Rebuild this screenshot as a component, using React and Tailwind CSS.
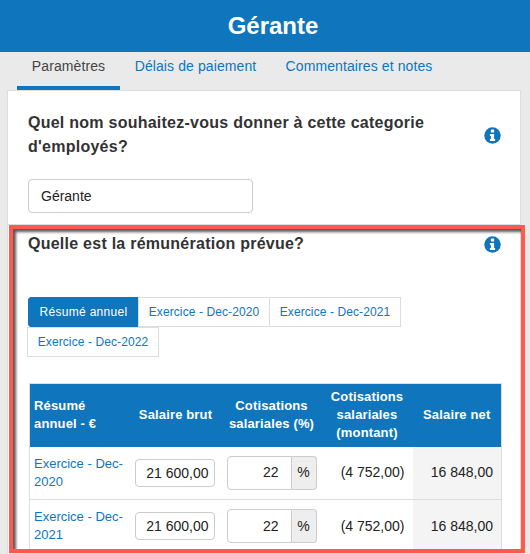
const FONT = "font-['Liberation_Sans',Arial,sans-serif]"

function InfoIcon() {
  return (
    <svg viewBox="0 0 17 17" className="-mr-px h-[17px] w-[17px] shrink-0">
      <circle cx="8.5" cy="8.5" r="8.25" fill="#0f75bc" />
      <rect x="6.9" y="2.6" width="3.2" height="2.9" rx="0.6" fill="#fff" />
      <path d="M5.9 6.9h4.2v5.2h1v2H5.9v-2h1V8.9h-1z" fill="#fff" />
    </svg>
  )
}

function Question({ children }) {
  return (
    <div className="flex items-center justify-between">
      <h2 className="w-[420px] text-[16px] leading-[24px] font-bold tracking-[0.25px] text-[#333]">{children}</h2>
      <InfoIcon />
    </div>
  )
}

function SubTab({ children, active }) {
  return (
    <a
      className={
        'flex h-[30px] items-center justify-center border text-[12px] ' +
        (active
          ? 'w-[111px] rounded-l-[3px] border-[#0f75bc] bg-[#0f75bc] tracking-[0.3px] text-white'
          : '-ml-px w-[132px] border-[#ddd] bg-white tracking-[0.1px] text-[#0f75bc] first:ml-0')
      }
    >
      {children}
    </a>
  )
}

function Row({ label }) {
  return (
    <tr className="h-[53px] border-b border-[#ddd] text-[14px] text-[#222]">
      <td className="pr-[4px] pl-[4px] align-middle text-[13px] leading-[18px] text-[#0f75bc]">{label}</td>
      <td className="px-[5px] align-middle">
        <input
          readOnly
          value="21 600,00"
          className="h-[28px] w-[80px] rounded-[4px] border border-[#ccc] bg-white pr-[5px] text-right outline-none"
        />
      </td>
      <td className="px-[5px] align-middle">
        <div className="flex h-[34px] w-[90px]">
          <input
            readOnly
            value="22"
            className="w-[65px] rounded-l-[4px] border border-[#ccc] bg-white pr-[12px] text-right outline-none"
          />
          <span className="flex w-[25px] items-center justify-center rounded-r-[4px] border border-l-0 border-[#ccc] bg-[#eee]">%</span>
        </div>
      </td>
      <td className="px-[8px] text-right align-middle">(4 752,00)</td>
      <td className="bg-[#f4f4f4] px-[8px] text-right align-middle">16 848,00</td>
    </tr>
  )
}

export default function App() {
  return (
    <div className={`relative h-[554px] w-[530px] overflow-hidden bg-[#eaeaea] ${FONT}`}>
      <header className="flex h-[52px] items-center justify-center bg-[#0f75bc] pl-[16px] text-[24px] font-bold text-white">
        Gérante
      </header>

      <nav className="flex h-[38px] pl-[17px] text-[14px] tracking-[0.1px]">
        <a className="w-[103px] border-b-4 border-[#0f75bc] pt-[4px] text-center text-[#444]">Paramètres</a>
        <a className="w-[151px] pt-[4px] text-center text-[#0f75bc]">Délais de paiement</a>
        <a className="w-[176px] pt-[4px] text-center text-[#0f75bc]">Commentaires et notes</a>
      </nav>

      <main className="ml-[7px] w-[514px] border border-[#ddd] bg-white">
        <section className="px-[20px] pt-[20px] pb-[11px]">
          <Question>Quel nom souhaitez-vous donner à cette categorie d'employés?</Question>
          <input
            readOnly
            value="Gérante"
            className="mt-[20px] block h-[34px] w-[225px] rounded-[4px] border border-[#ccc] px-[12px] text-[14px] text-[#222] outline-none"
          />
        </section>

        <section className="border-t border-[#ddd] px-[20px] pt-[7px]">
          <Question>Quelle est la rémunération prévue?</Question>

          <div className="mt-[41px] flex flex-wrap">
            <SubTab active>Résumé annuel</SubTab>
            <SubTab>Exercice - Dec-2020</SubTab>
            <SubTab>Exercice - Dec-2021</SubTab>
            <div className="w-full" />
            <SubTab>Exercice - Dec-2022</SubTab>
          </div>

          <table className="mt-[26px] ml-[1px] w-[472px] table-fixed border-collapse border border-[#ddd]">
            <colgroup>
              <col className="w-[100px]" />
              <col className="w-[92px]" />
              <col className="w-[100px]" />
              <col className="w-[91px]" />
              <col className="w-[89px]" />
            </colgroup>
            <thead>
              <tr className="h-[63px] bg-[#0f75bc] text-[13px] leading-[18px] font-bold tracking-[0.15px] text-white">
                <th className="px-[4px] text-left font-bold">Résumé annuel - €</th>
                <th className="px-[2px] font-bold">Salaire brut</th>
                <th className="px-[2px] font-bold">Cotisations salariales (%)</th>
                <th className="px-[2px] font-bold">Cotisations salariales (montant)</th>
                <th className="px-[2px] font-bold">Salaire net</th>
              </tr>
            </thead>
            <tbody>
              <Row label="Exercice - Dec-2020" />
              <Row label="Exercice - Dec-2021" />
            </tbody>
          </table>
        </section>
      </main>

      {/* annotation frame drawn over the screenshot */}
      <div className="pointer-events-none absolute top-[225px] left-[9px] h-[328px] w-[516px] border-[4px] border-[#ff5a4f] shadow-[inset_3px_3px_3px_rgba(0,0,0,0.65)]" />
    </div>
  )
}
